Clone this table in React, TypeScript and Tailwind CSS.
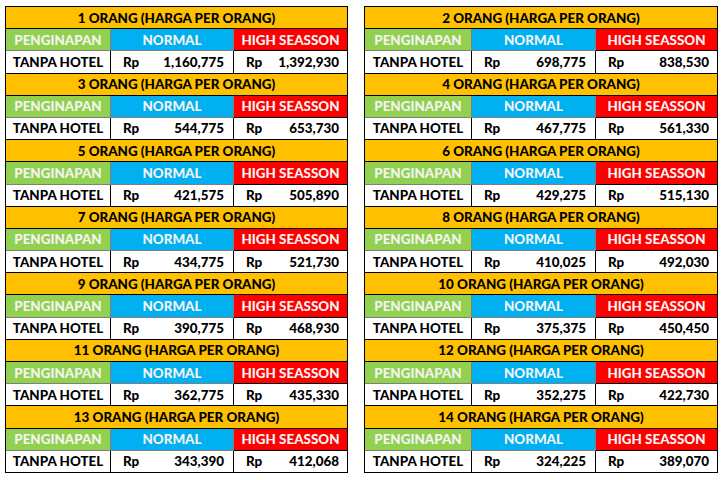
const data: [number, string, string][] = [
  [1, "1,160,775", "1,392,930"],
  [2, "698,775", "838,530"],
  [3, "544,775", "653,730"],
  [4, "467,775", "561,330"],
  [5, "421,575", "505,890"],
  [6, "429,275", "515,130"],
  [7, "434,775", "521,730"],
  [8, "410,025", "492,030"],
  [9, "390,775", "468,930"],
  [10, "375,375", "450,450"],
  [11, "362,775", "435,330"],
  [12, "352,275", "422,730"],
  [13, "343,390", "412,068"],
  [14, "324,225", "389,070"],
];

function PriceTable({
  rows,
  cols,
}: {
  rows: [number, string, string][];
  cols: string;
}) {
  return (
    <div
      className={`grid ${cols} auto-rows-[22.2px] border-l border-t border-black text-[13.4px] font-black text-black`}
    >
      {rows.map(([n, normal, high]) => (
        <div key={n} className="contents">
          <div className="col-span-3 flex items-center justify-center bg-[#ffc000] border-r border-b border-black">
            {n} ORANG (HARGA PER ORANG)
          </div>
          <div className="flex items-center justify-center bg-[#92d050] text-[#f4f4f4] border-r border-b border-[#7f7f7f]">
            PENGINAPAN
          </div>
          <div className="flex items-center justify-center bg-[#00b0f0] text-[#f4f4f4] border-r border-b border-[#7f7f7f]">
            NORMAL
          </div>
          <div className="flex items-center justify-center bg-[#ff0000] text-[#f4f4f4] border-r border-b border-black">
            HIGH SEASSON
          </div>
          <div className="flex items-center justify-center bg-white border-r border-b border-black">
            TANPA HOTEL
          </div>
          <div className="flex items-center justify-between bg-white pl-[12px] pr-[9px] border-r border-b border-black">
            <span>Rp</span>
            <span>{normal}</span>
          </div>
          <div className="flex items-center justify-between bg-white pl-[12px] pr-[8px] border-r border-b border-black">
            <span>Rp</span>
            <span>{high}</span>
          </div>
        </div>
      ))}
    </div>
  );
}

export default function App() {
  const left = data.filter(([n]) => n % 2 === 1);
  const right = data.filter(([n]) => n % 2 === 0);
  return (
    <div
      className="w-[723px] h-[480px] bg-white flex items-start gap-[16px] pl-[5px] pt-[6px]"
      style={{ fontFamily: "Lato, 'Open Sans', sans-serif" }}
    >
      <PriceTable rows={left} cols="grid-cols-[105px_123px_114px]" />
      <PriceTable rows={right} cols="grid-cols-[107px_124px_122px]" />
    </div>
  );
}
